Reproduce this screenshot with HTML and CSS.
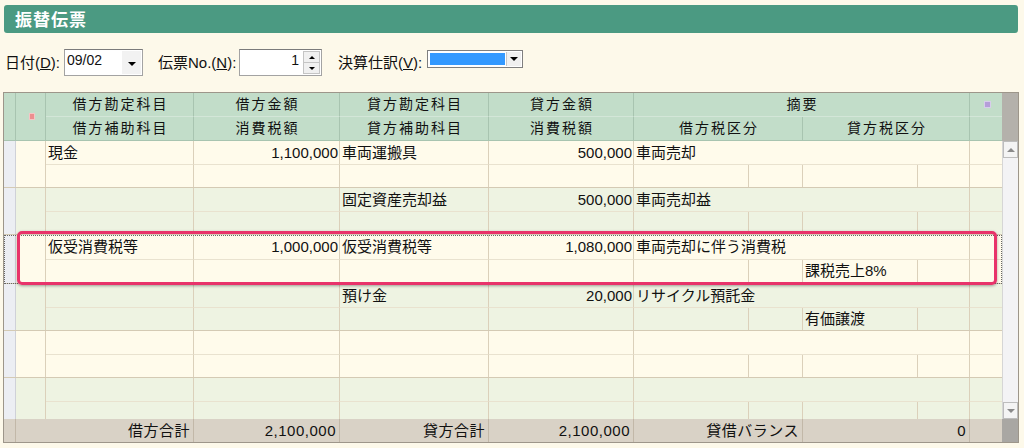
FILE: index.html
```html
<!DOCTYPE html>
<html lang="ja">
<head>
<meta charset="utf-8">
<title>振替伝票</title>
<link rel="stylesheet" href="styles.css">
</head>
<body>
<div class="title">振替伝票</div>

<div class="toolbar">
  <span class="lbl lbl-date">日付(<u>D</u>):</span>
  <div class="combo">
    <span class="val">09/02</span>
    <span class="cbtn"><i class="tri"></i></span>
  </div>
  <span class="lbl lbl-no">伝票No.(<u>N</u>):</span>
  <div class="spin">
    <span class="sval">1</span>
    <span class="spbtns">
      <span class="sp sp-up"><i class="tri-up"></i></span>
      <span class="sp sp-dn"><i class="tri-sm"></i></span>
    </span>
  </div>
  <span class="lbl lbl-kessan">決算仕訳(<u>V</u>):</span>
  <div class="select">
    <span class="fill"></span>
    <span class="sbtn"><i class="tri"></i></span>
  </div>
</div>

<div class="grid">
  <div class="hdr">
    <div class="hgrid">
      <div class="h h-rh"></div>
      <div class="h h-c2"><i class="ico-pink"></i></div>
      <div class="h">借方勘定科目</div>
      <div class="h">借方金額</div>
      <div class="h">貸方勘定科目</div>
      <div class="h">貸方金額</div>
      <div class="h h-tek">摘要</div>
      <div class="h h-ic"><i class="ico-purple"></i></div>
      <div class="h">借方補助科目</div>
      <div class="h">消費税額</div>
      <div class="h">貸方補助科目</div>
      <div class="h">消費税額</div>
      <div class="h h-span2">借方税区分</div>
      <div class="h h-span2">貸方税区分</div>
      <div class="h h-ic"></div>
    </div>
    <div class="hsb"></div>
  </div>

  <div class="body">
    <div class="rows">
      <div class="entry odd">
        <div class="d rh"></div><div class="d c2"></div>
        <div class="d a">現金</div><div class="d a num">1,100,000</div>
        <div class="d a">車両運搬具</div><div class="d a num">500,000</div>
        <div class="d a tek">車両売却</div><div class="d a ic"></div>
        <div class="d"></div><div class="d"></div><div class="d"></div><div class="d"></div>
        <div class="d"></div><div class="d"></div><div class="d"></div><div class="d"></div><div class="d ic"></div>
      </div>
      <div class="entry even">
        <div class="d rh"></div><div class="d c2"></div>
        <div class="d a"></div><div class="d a num"></div>
        <div class="d a">固定資産売却益</div><div class="d a num">500,000</div>
        <div class="d a tek">車両売却益</div><div class="d a ic"></div>
        <div class="d"></div><div class="d"></div><div class="d"></div><div class="d"></div>
        <div class="d"></div><div class="d"></div><div class="d"></div><div class="d"></div><div class="d ic"></div>
      </div>
      <div class="entry odd sel">
        <div class="d rh"></div><div class="d c2"></div>
        <div class="d a">仮受消費税等</div><div class="d a num">1,000,000</div>
        <div class="d a">仮受消費税等</div><div class="d a num">1,080,000</div>
        <div class="d a tek">車両売却に伴う消費税</div><div class="d a ic"></div>
        <div class="d"></div><div class="d"></div><div class="d"></div><div class="d"></div>
        <div class="d"></div><div class="d"></div><div class="d">課税売上8%</div><div class="d"></div><div class="d ic"></div>
      </div>
      <div class="entry even">
        <div class="d rh"></div><div class="d c2"></div>
        <div class="d a"></div><div class="d a num"></div>
        <div class="d a">預け金</div><div class="d a num">20,000</div>
        <div class="d a tek">リサイクル預託金</div><div class="d a ic"></div>
        <div class="d"></div><div class="d"></div><div class="d"></div><div class="d"></div>
        <div class="d"></div><div class="d"></div><div class="d">有価譲渡</div><div class="d"></div><div class="d ic"></div>
      </div>
      <div class="entry odd">
        <div class="d rh"></div><div class="d c2"></div>
        <div class="d a"></div><div class="d a num"></div>
        <div class="d a"></div><div class="d a num"></div>
        <div class="d a tek"></div><div class="d a ic"></div>
        <div class="d"></div><div class="d"></div><div class="d"></div><div class="d"></div>
        <div class="d"></div><div class="d"></div><div class="d"></div><div class="d"></div><div class="d ic"></div>
      </div>
      <div class="entry even">
        <div class="d rh"></div><div class="d c2"></div>
        <div class="d a"></div><div class="d a num"></div>
        <div class="d a"></div><div class="d a num"></div>
        <div class="d a tek"></div><div class="d a ic"></div>
        <div class="d"></div><div class="d"></div><div class="d"></div><div class="d"></div>
        <div class="d"></div><div class="d"></div><div class="d"></div><div class="d"></div><div class="d ic"></div>
      </div>
    </div>
    <div class="sb">
      <div class="sbb"><i class="tri-gray-up"></i></div>
      <div class="sbtrack"></div>
      <div class="sbb"><i class="tri-gray"></i></div>
    </div>
  </div>

  <div class="tot">
    <div class="tgrid">
      <div class="t"></div>
      <div class="t">借方合計</div>
      <div class="t">2,100,000</div>
      <div class="t">貸方合計</div>
      <div class="t">2,100,000</div>
      <div class="t">貸借バランス</div>
      <div class="t">0</div>
      <div class="t t-last"></div>
    </div>
    <div class="tsb"></div>
  </div>

  <div class="highlight"></div>
</div>
</body>
</html>
```

FILE: styles.css
```css
* { box-sizing: border-box; margin: 0; padding: 0; }

body {
  width: 1024px;
  height: 448px;
  overflow: hidden;
  background: #fdf9ea;
  color: #111;
  font-family: "Liberation Sans", "Noto Sans CJK JP", sans-serif;
  font-size: 15px;
}

/* title bar */
.title {
  margin: 5px 6px 0 4px;
  height: 28px;
  background: #4b9a82;
  border-radius: 3px;
  color: #fff;
  font-family: "Noto Sans CJK JP", sans-serif;
  font-size: 17px;
  font-weight: bold;
  letter-spacing: 1px;
  line-height: 28px;
  padding-left: 11px;
}

/* toolbar */
.toolbar {
  display: flex;
  align-items: flex-start;
  height: 27px;
  margin-top: 16px;
  padding-left: 5px;
}
.lbl {
  line-height: 27px;
  font-size: 15px;
  white-space: nowrap;
}
.lbl u { text-decoration: underline; }
.lbl-date { width: 59px; }
.lbl-no { width: 81px; margin-left: 15px; }
.lbl-kessan { width: 89px; margin-left: 16px; }

.combo {
  width: 79px;
  height: 27px;
  background: #fff;
  border: 1px solid #a3a3a3;
  border-top-color: #7b7b7b;
  display: flex;
}
.combo .val {
  flex: 1;
  font-size: 14px;
  line-height: 14px;
  padding: 3px 0 0 2px;
}
.cbtn {
  width: 19px;
  margin: 1px;
  background: #f2f2f2;
  display: flex;
  align-items: center;
  justify-content: center;
  padding-top: 2px;
}
.tri {
  display: block;
  width: 0;
  height: 0;
  border-left: 4px solid transparent;
  border-right: 4px solid transparent;
  border-top: 4px solid #000;
}

.spin {
  width: 83px;
  height: 27px;
  background: #fff;
  border: 1px solid #a3a3a3;
  border-top-color: #7b7b7b;
  display: flex;
}
.sval {
  flex: 1;
  text-align: right;
  font-size: 14px;
  line-height: 14px;
  padding: 3px 4px 0 0;
}
.spbtns {
  width: 17px;
  display: flex;
  flex-direction: column;
  margin: 1px 1px 1px 0;
}
.sp {
  flex: 1;
  background: #f0f0f0;
  border: 1px solid #c4c4c4;
  display: flex;
  align-items: center;
  justify-content: center;
}
.sp-dn { border-top: none; }
.tri-up {
  display: block;
  width: 0;
  height: 0;
  border-left: 3px solid transparent;
  border-right: 3px solid transparent;
  border-bottom: 3px solid #000;
}
.tri-sm {
  display: block;
  width: 0;
  height: 0;
  border-left: 3px solid transparent;
  border-right: 3px solid transparent;
  border-top: 3px solid #000;
}

.select {
  margin-top: 1px;
  width: 96px;
  height: 18px;
  background: #fff;
  border: 1px solid #7f7f7f;
  display: flex;
  padding: 1px;
}
.fill {
  flex: 1;
  background: #3399ff;
  margin: 1px;
}
.sbtn {
  width: 15px;
  background: #f0f0f0;
  border-left: 1px solid #c8c8c8;
  display: flex;
  align-items: center;
  justify-content: center;
}

/* grid */
.grid {
  position: relative;
  margin: 16px 0 0 3px;
  width: 1016px;
  border: 1px solid #9d968a;
}

.hdr { display: flex; }
.hgrid {
  width: 998px;
  display: grid;
  grid-template-columns: 12px 30px 148px 146px 149px 145px 115px 54px 115px 52px 32px;
  grid-template-rows: 24px 24px;
  background: #c2ddc9;
}
.h {
  border-right: 1px solid #a8c4b0;
  border-bottom: 1px solid #a8c4b0;
  text-align: center;
  font-size: 14px;
  letter-spacing: 2px;
  padding-left: 2px;
  line-height: 23px;
  white-space: nowrap;
}
.h-rh { grid-row: span 2; }
.h-c2 {
  grid-row: span 2;
  display: flex;
  align-items: center;
  justify-content: center;
}
.h-tek { grid-column: span 4; }
.h-span2 { grid-column: span 2; }
.h-ic {
  border-right: none;
  display: flex;
  align-items: center;
  justify-content: center;
}
.hgrid > .h:nth-child(3),
.hgrid > .h:nth-child(4),
.hgrid > .h:nth-child(5),
.hgrid > .h:nth-child(6),
.hgrid > .h:nth-child(7),
.hgrid > .h:nth-child(8) { border-bottom-color: #d3e6d8; }

.ico-pink {
  display: block;
  width: 6px;
  height: 7px;
  background: #ec8f8f;
  border: 1px solid #f6c5c5;
}
.ico-purple {
  display: block;
  width: 7px;
  height: 7px;
  background: #b59ed9;
  border: 1px solid #d7cdea;
}
.hsb { width: 16px; background: #b4b1ab; }

.body {
  display: flex;
  height: 278px;
  overflow: hidden;
}
.rows { width: 998px; }

.entry {
  display: grid;
  grid-template-columns: 12px 30px 148px 146px 149px 145px 115px 54px 115px 52px 32px;
  grid-template-rows: 24px 22px;
  border-bottom: 1px solid #d4cab4;
}
.entry.odd { background: #fffbeb; }
.entry.even { background: #eef3e2; }
.entry.sel {
  grid-template-rows: 25px 23px;
  outline: 1px dotted #666;
  outline-offset: -1px;
}

.d {
  border-right: 1px solid #dbd0ba;
  padding: 0 2px;
  line-height: 22px;
  white-space: nowrap;
  overflow: hidden;
}
.d.a { border-bottom: 1px solid #e9e2cf; line-height: 23px; }
.d.num { text-align: right; padding-right: 1px; }
.d.rh {
  grid-row: span 2;
  background: #eceef3;
  border-right: 1px solid #cfd1d8;
}
.d.c2 { grid-row: span 2; }
.d.tek { grid-column: span 4; }
.d.ic { border-right: none; }

.sb {
  width: 16px;
  display: flex;
  flex-direction: column;
  background: #f3f3f5;
  border-left: 1px solid #d6d6d6;
}
.sbb {
  height: 17px;
  background: #f4f4f4;
  border: 1px solid #bdbdbd;
  display: flex;
  align-items: center;
  justify-content: center;
}
.sbtrack { flex: 1; }
.tri-gray-up {
  display: block;
  width: 0;
  height: 0;
  border-left: 4px solid transparent;
  border-right: 4px solid transparent;
  border-bottom: 4px solid #8a8a8a;
}
.tri-gray {
  display: block;
  width: 0;
  height: 0;
  border-left: 4px solid transparent;
  border-right: 4px solid transparent;
  border-top: 4px solid #8a8a8a;
}

.tot {
  display: flex;
  height: 23px;
  background: #d9d2c6;
}
.tgrid {
  width: 998px;
  display: grid;
  grid-template-columns: 12px 178px 146px 149px 145px 169px 167px 32px;
}
.t {
  border-right: 1px solid #c2b8a8;
  text-align: right;
  padding-right: 3px;
  line-height: 23px;
  letter-spacing: 0.5px;
  white-space: nowrap;
}
.t-last { border-right: none; }
.tsb { width: 16px; background: #a9a7a3; }

/* pink highlight overlay */
.highlight {
  position: absolute;
  left: 13px;
  top: 138px;
  width: 980px;
  height: 54px;
  border: 3px solid #e8336a;
  border-radius: 5px;
  box-shadow: 0 1px 3px rgba(0, 0, 0, 0.35);
  pointer-events: none;
}
```
